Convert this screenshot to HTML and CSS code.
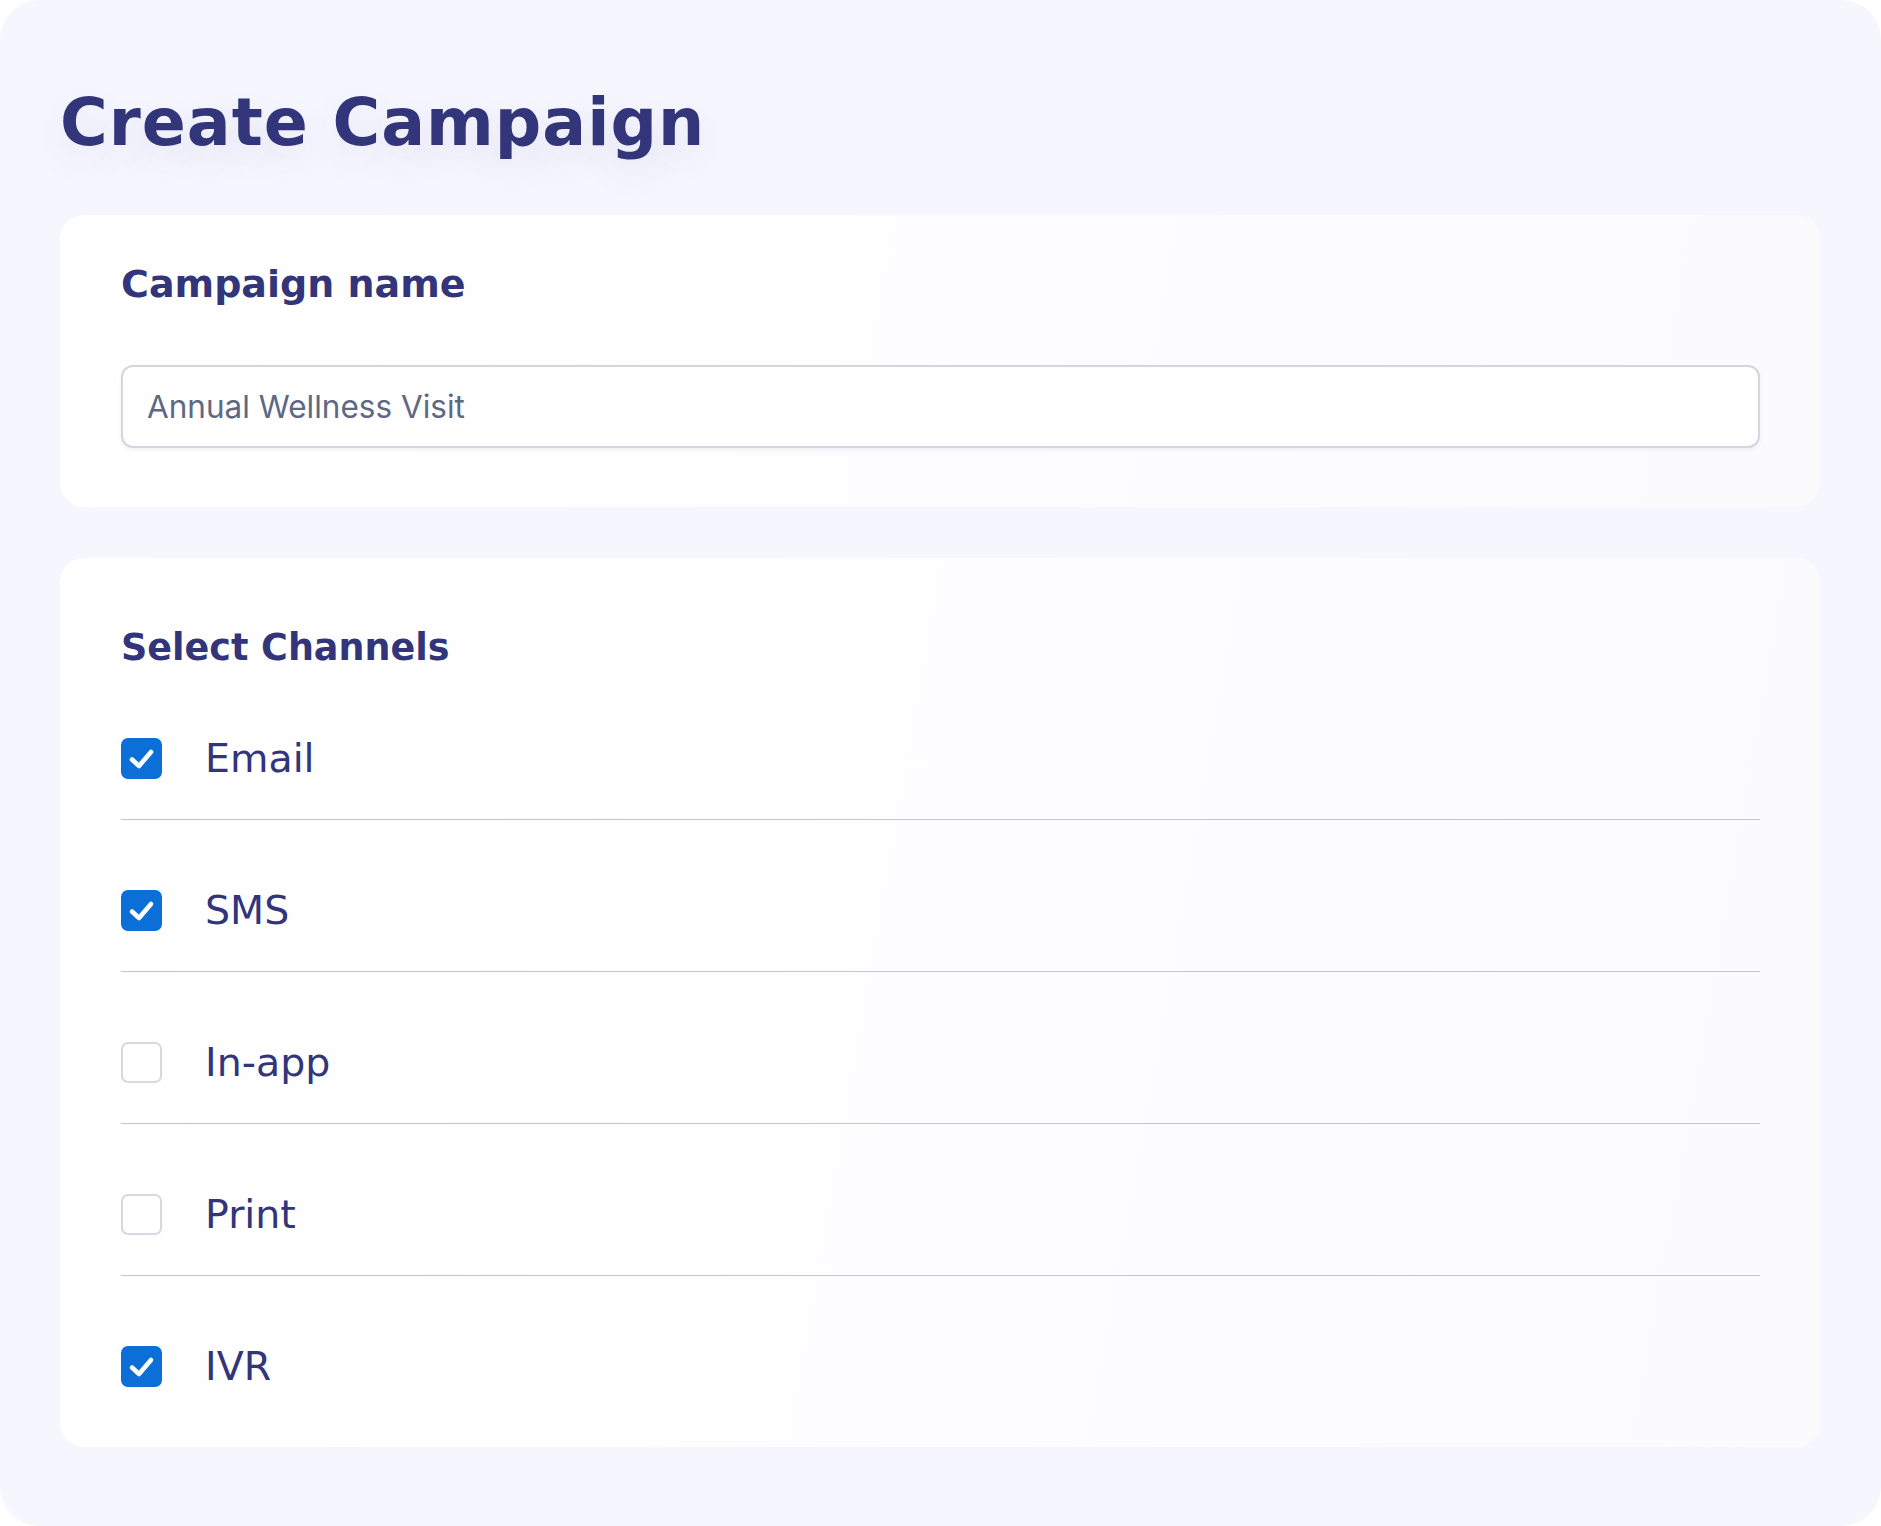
FILE: index.html
```html
<!DOCTYPE html>
<html lang="en">
<head>
<meta charset="utf-8">
<title>Create Campaign</title>
<link rel="stylesheet" href="styles.css">
</head>
<body>
<main class="page">
  <h1 class="title">Create Campaign</h1>

  <section class="card card-name">
    <label class="card-label" for="campaign-name">Campaign name</label>
    <input id="campaign-name" class="text-input" type="text" value="Annual Wellness Visit">
  </section>

  <section class="card card-channels">
    <h2 class="card-heading">Select Channels</h2>
    <ul class="channel-list">
      <li class="channel">
        <span class="check is-checked"><svg viewBox="0 0 41 41"><polyline points="11,21.5 18,28 30,14"/></svg></span>
        <span class="channel-label">Email</span>
      </li>
      <li class="channel">
        <span class="check is-checked"><svg viewBox="0 0 41 41"><polyline points="11,21.5 18,28 30,14"/></svg></span>
        <span class="channel-label">SMS</span>
      </li>
      <li class="channel">
        <span class="check"></span>
        <span class="channel-label">In-app</span>
      </li>
      <li class="channel">
        <span class="check"></span>
        <span class="channel-label">Print</span>
      </li>
      <li class="channel">
        <span class="check is-checked"><svg viewBox="0 0 41 41"><polyline points="11,21.5 18,28 30,14"/></svg></span>
        <span class="channel-label">IVR</span>
      </li>
    </ul>
  </section>
</main>
</body>
</html>
```

FILE: styles.css
```css
* {
  box-sizing: border-box;
}

html, body {
  margin: 0;
  padding: 0;
  background: #ffffff;
}

.page {
  width: 1881px;
  height: 1526px;
  background: #f5f6fe;
  border-radius: 40px;
  padding: 84px 61px 80px 60px;
  display: flex;
  flex-direction: column;
  font-family: "DejaVu Sans", "Noto Sans", sans-serif;
  color: #32357a;
}

.title {
  margin: 0 0 53px 0;
  font-size: 65px;
  line-height: 78px;
  font-weight: 700;
  letter-spacing: 1px;
  color: #32357a;
  text-shadow: 0 14px 36px rgba(70, 70, 150, 0.10);
}

.card {
  background: linear-gradient(100deg, #ffffff 0%, #fdfdff 55%, #fbfbfe 100%);
  border-radius: 24px;
}

.card-name {
  padding: 46px 60px 59px 61px;
  display: flex;
  flex-direction: column;
  gap: 58px;
}

.card-label {
  font-size: 38px;
  line-height: 46px;
  font-weight: 700;
  color: #32357a;
}

.text-input {
  width: 100%;
  height: 83px;
  border: 2px solid #d3d6df;
  border-radius: 12px;
  background: #ffffff;
  box-shadow: 0 2px 4px rgba(30, 40, 80, 0.06);
  padding: 0 24px;
  font-family: "Inter", "Liberation Sans", sans-serif;
  font-size: 31.5px;
  color: #5e6883;
  outline: none;
}

.card-channels {
  margin-top: 51px;
  padding: 70px 60px 20px 61px;
}

.card-heading {
  margin: 0;
  font-size: 36.5px;
  line-height: 40px;
  font-weight: 700;
  color: #32357a;
}

.channel-list {
  list-style: none;
  margin: 0;
  padding: 0;
}

.channel {
  display: flex;
  align-items: center;
  gap: 43px;
  padding: 70px 0 40px 0;
  border-bottom: 1px solid #c4c3da;
}

.channel:last-child {
  border-bottom: none;
}

.check {
  width: 41px;
  height: 41px;
  flex: 0 0 41px;
  border-radius: 7px;
  border: 2px solid #d6d9e2;
  background: #ffffff;
  display: flex;
}

.check.is-checked {
  border: none;
  background: #0c6fd8;
}

.check svg {
  width: 41px;
  height: 41px;
}

.check polyline {
  fill: none;
  stroke: #ffffff;
  stroke-width: 4.6;
  stroke-linecap: round;
  stroke-linejoin: round;
}

.channel-label {
  font-size: 39.5px;
  line-height: 41px;
  font-weight: 400;
  color: #32357a;
}
```
